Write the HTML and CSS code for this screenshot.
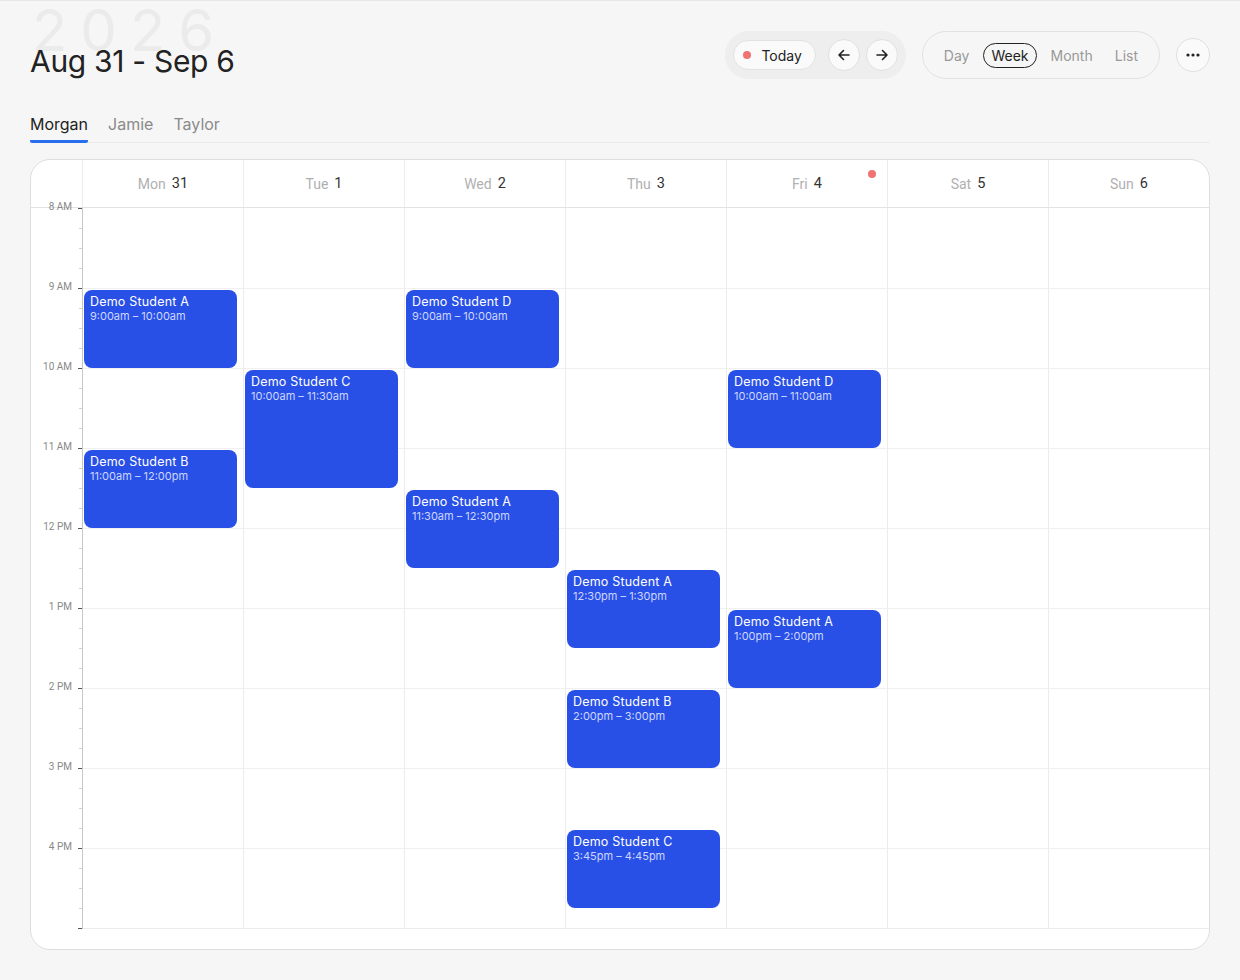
FILE: index.html
```html
<!DOCTYPE html>
<html lang="en">
<head>
    <meta charset="UTF-8">
    <meta name="viewport" content="width=device-width, initial-scale=1.0">
    <title>Schedule - Week</title>
    <link rel="stylesheet" href="styles.css">
</head>
<body>
    <div class="page">
        <header class="top">
            <div class="title-wrap">
                <span class="year">2026</span>
                <h1 class="range">Aug 31 - Sep 6</h1>
            </div>
            <div class="toolbar">
                <div class="nav-group">
                    <button class="today"><span class="today-dot"></span>Today</button>
                    <button class="circle" aria-label="Previous">
                        <svg width="14" height="14" viewBox="0 0 14 14" fill="none" stroke="#222" stroke-width="1.6" stroke-linecap="round" stroke-linejoin="round"><path d="M12 7H2M6.5 2.5L2 7l4.5 4.5"/></svg>
                    </button>
                    <button class="circle" aria-label="Next">
                        <svg width="14" height="14" viewBox="0 0 14 14" fill="none" stroke="#222" stroke-width="1.6" stroke-linecap="round" stroke-linejoin="round"><path d="M2 7h10M7.5 2.5L12 7l-4.5 4.5"/></svg>
                    </button>
                </div>
                <div class="views">
                    <button class="view">Day</button>
                    <button class="view active">Week</button>
                    <button class="view">Month</button>
                    <button class="view">List</button>
                </div>
                <button class="circle more" aria-label="More">
                    <svg width="14" height="4" viewBox="0 0 14 4" fill="#222"><circle cx="2" cy="2" r="1.6"/><circle cx="7" cy="2" r="1.6"/><circle cx="12" cy="2" r="1.6"/></svg>
                </button>
            </div>
        </header>

        <nav class="tabs">
            <a class="tab active">Morgan</a>
            <a class="tab">Jamie</a>
            <a class="tab">Taylor</a>
        </nav>

        <section class="calendar">
            <div class="cal-head" id="cal-head">
                <div class="gutter-head"></div>
            </div>
            <div class="cal-body" id="cal-body">
                <div class="axis" id="axis"></div>
            </div>
        </section>
    </div>

    <script>
        // week of Aug 31 - Sep 6, hours 8am - 5pm
        const days = [
            { name: 'Mon', num: 31 },
            { name: 'Tue', num: 1 },
            { name: 'Wed', num: 2 },
            { name: 'Thu', num: 3 },
            { name: 'Fri', num: 4, today: true },
            { name: 'Sat', num: 5 },
            { name: 'Sun', num: 6 }
        ];
        const hours = ['8 AM', '9 AM', '10 AM', '11 AM', '12 PM', '1 PM', '2 PM', '3 PM', '4 PM'];
        const HOUR = 80;

        // start / end in hours from 8:00
        const events = [
            { day: 0, title: 'Demo Student A', time: '9:00am – 10:00am', start: 1, end: 2 },
            { day: 0, title: 'Demo Student B', time: '11:00am – 12:00pm', start: 3, end: 4 },
            { day: 1, title: 'Demo Student C', time: '10:00am – 11:30am', start: 2, end: 3.5 },
            { day: 2, title: 'Demo Student D', time: '9:00am – 10:00am', start: 1, end: 2 },
            { day: 2, title: 'Demo Student A', time: '11:30am – 12:30pm', start: 3.5, end: 4.5 },
            { day: 3, title: 'Demo Student A', time: '12:30pm – 1:30pm', start: 4.5, end: 5.5 },
            { day: 3, title: 'Demo Student B', time: '2:00pm – 3:00pm', start: 6, end: 7 },
            { day: 3, title: 'Demo Student C', time: '3:45pm – 4:45pm', start: 7.75, end: 8.75 },
            { day: 4, title: 'Demo Student D', time: '10:00am – 11:00am', start: 2, end: 3 },
            { day: 4, title: 'Demo Student A', time: '1:00pm – 2:00pm', start: 5, end: 6 }
        ];

        const head = document.getElementById('cal-head');
        const body = document.getElementById('cal-body');
        const axis = document.getElementById('axis');

        hours.forEach(h => {
            const el = document.createElement('div');
            el.className = 'hour-label';
            el.innerHTML = `<span>${h}</span>`;
            axis.appendChild(el);
        });

        days.forEach((d, i) => {
            const th = document.createElement('div');
            th.className = 'day-head' + (d.today ? ' is-today' : '');
            th.innerHTML = `<span class="day-name">${d.name}</span><span class="day-num">${d.num}</span>`;
            head.appendChild(th);

            const col = document.createElement('div');
            col.className = 'day-col';
            hours.forEach(() => {
                const slot = document.createElement('div');
                slot.className = 'slot';
                col.appendChild(slot);
            });
            events.filter(e => e.day === i).forEach(e => {
                const ev = document.createElement('div');
                ev.className = 'event';
                ev.style.top = (e.start * HOUR + 2) + 'px';
                ev.style.height = ((e.end - e.start) * HOUR - 2) + 'px';
                ev.innerHTML = `<div class="event-title">${e.title}</div><div class="event-time">${e.time}</div>`;
                col.appendChild(ev);
            });
            body.appendChild(col);
        });
    </script>
</body>
</html>
```

FILE: styles.css
```css
* {
    box-sizing: border-box;
}
body {
    margin: 0;
    background-color: #f6f6f6;
    color: #222;
    font-family: Inter, 'Noto Sans', sans-serif;
    border-top: 1px solid #e6e6e6;
}
button {
    font-family: inherit;
    cursor: pointer;
}
.page {
    padding: 0 30px;
}
.top {
    display: flex;
    justify-content: space-between;
    align-items: flex-start;
    height: 100px;
}
.title-wrap {
    position: relative;
    padding-top: 42px;
}
.year {
    position: absolute;
    left: 2px;
    top: 0;
    font-size: 58px;
    line-height: 1;
    font-weight: 400;
    color: #ebebeb;
    letter-spacing: 13px;
    z-index: 0;
}
.range {
    position: relative;
    margin: 0;
    font-size: 30px;
    font-weight: 400;
    letter-spacing: -0.3px;
    color: #222;
    z-index: 1;
}
.toolbar {
    display: flex;
    align-items: center;
    gap: 16px;
    margin-top: 30px;
}
.nav-group {
    display: flex;
    align-items: center;
    background-color: #eeeeee;
    border-radius: 24px;
    padding: 8px;
    height: 48px;
}
.today {
    display: flex;
    align-items: center;
    gap: 10px;
    height: 30px;
    padding: 0 13px 0 9px;
    border: 1px solid #e2e2e2;
    border-radius: 16px;
    background-color: #fafafa;
    font-size: 14px;
    color: #222;
    margin-right: 12px;
}
.today-dot {
    width: 8px;
    height: 8px;
    border-radius: 50%;
    background-color: #f07272;
}
.circle {
    display: flex;
    align-items: center;
    justify-content: center;
    width: 32px;
    height: 32px;
    padding: 0;
    border: 1px solid #e0e0e0;
    border-radius: 50%;
    background-color: #fafafa;
}
.circle + .circle {
    margin-left: 6px;
}
.views {
    display: flex;
    align-items: center;
    gap: 6px;
    height: 48px;
    padding: 0 13px;
    border: 1px solid #e2e2e2;
    border-radius: 24px;
}
.view {
    border: 1.5px solid transparent;
    background: none;
    font-size: 14px;
    color: #999;
    padding: 3px 7px;
    border-radius: 14px;
    margin: 0;
}
.view.active {
    border-color: #222;
    color: #222;
}
.more {
    width: 34px;
    height: 34px;
}
.tabs {
    display: flex;
    gap: 20px;
    border-bottom: 1px solid #ebebeb;
    margin-top: 9px;
}
.tab {
    font-size: 16px;
    color: #8a8a8a;
    padding: 4px 0 6px;
    border-bottom: 3px solid transparent;
    margin-bottom: -1px;
}
.tab.active {
    color: #222;
    border-bottom-color: #2a6ef0;
    border-radius: 0 0 2px 2px;
}
.calendar {
    margin-top: 16px;
    background-color: #fff;
    border: 1px solid #dedede;
    border-radius: 20px;
    padding-bottom: 20px;
    overflow: hidden;
}
.cal-head,
.cal-body {
    display: grid;
    grid-template-columns: 51px repeat(7, 1fr);
}
.cal-head {
    height: 48px;
    border-bottom: 1px solid #e2e2e2;
}
.day-head {
    position: relative;
    display: flex;
    align-items: center;
    justify-content: center;
    gap: 6px;
    border-left: 1px solid #ececec;
    font-family: Roboto, sans-serif;
    font-size: 14px;
}
.day-name {
    color: #b0b0b0;
}
.day-num {
    color: #333;
    font-size: 14.5px;
}
.is-today::after {
    content: '';
    position: absolute;
    top: 10px;
    right: 11px;
    width: 8px;
    height: 8px;
    border-radius: 50%;
    background-color: #f07272;
}
.axis {
    border-right: 1px solid #c8c8c8;
    background-image:
        linear-gradient(to bottom, #555 0, #555 1px, transparent 1px),
        linear-gradient(to bottom, #d4d4d4 0, #d4d4d4 1px, transparent 1px);
    background-size: 4px 80px, 3px 20px;
    background-position: right top, right top;
    background-repeat: repeat-y;
    margin-right: -1px;
    position: relative;
    z-index: 1;
}
.hour-label {
    height: 80px;
    padding-right: 10px;
    text-align: right;
    font-family: Roboto, sans-serif;
    font-size: 10px;
    line-height: 12px;
    color: #888;
}
.hour-label span {
    display: inline-block;
    transform: translateY(-7px);
}
.day-col {
    position: relative;
    border-left: 1px solid #ececec;
    border-bottom: 1px solid #ececec;
}
.slot {
    height: 80px;
}
.slot + .slot {
    border-top: 1px solid #f0f0f0;
}
.event {
    position: absolute;
    left: 1px;
    right: 6px;
    background-color: #2850e6;
    border-radius: 8px;
    padding: 4px 6px;
    color: #fff;
}
.event-title {
    font-size: 12.5px;
    line-height: 15px;
    letter-spacing: 0.2px;
}
.event-time {
    font-size: 11px;
    line-height: 14px;
    color: #cdd6ff;
}
```
